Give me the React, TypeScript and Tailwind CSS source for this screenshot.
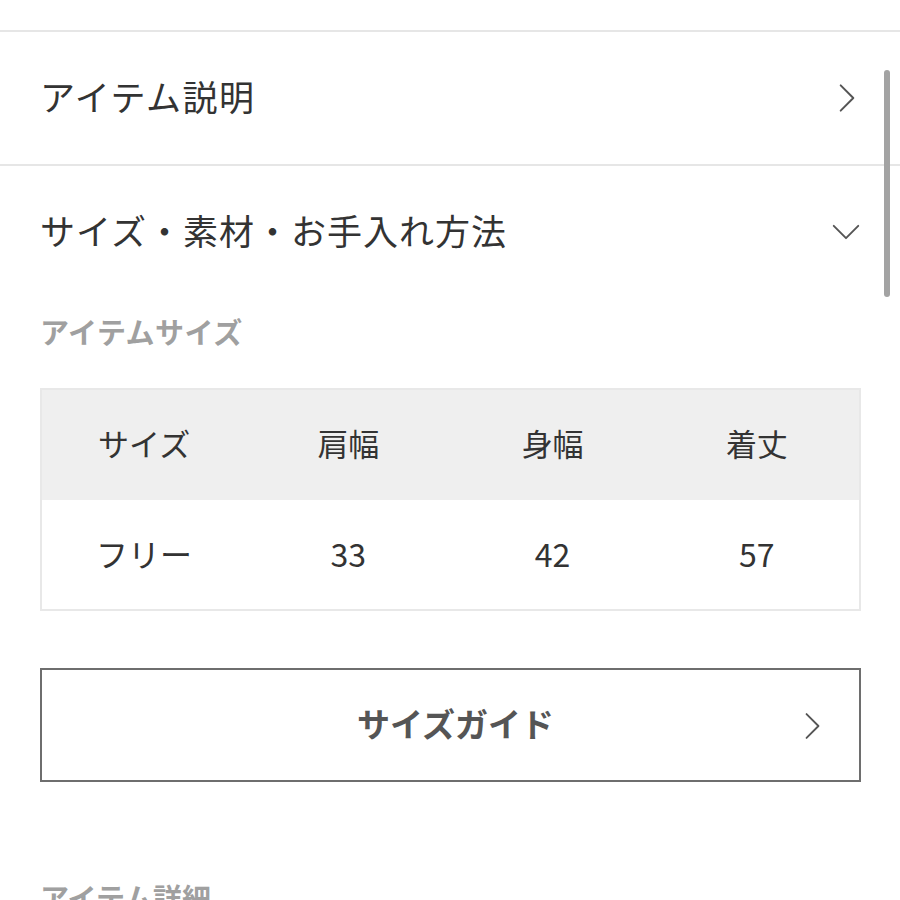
import React from "react";

const font = { fontFamily: '"Noto Sans CJK JP", "Noto Sans", sans-serif' };

function ChevronRight({ className }: { className?: string }) {
  return (
    <svg viewBox="0 0 20 32" className={className} fill="none" stroke="currentColor" strokeWidth="2.2" strokeLinecap="round" strokeLinejoin="round">
      <path d="M3 2 L17 16 L3 30" />
    </svg>
  );
}

function ChevronDown({ className }: { className?: string }) {
  return (
    <svg viewBox="0 0 32 20" className={className} fill="none" stroke="currentColor" strokeWidth="2.2" strokeLinecap="round" strokeLinejoin="round">
      <path d="M2 3 L16 17 L30 3" />
    </svg>
  );
}

export default function App() {
  const headers = ["サイズ", "肩幅", "身幅", "着丈"];
  const values = ["フリー", "33", "42", "57"];
  return (
    <div className="relative w-[900px] h-[900px] overflow-hidden bg-white" style={font}>
      <div className="h-[30px]" />
      <div className="border-t-2 border-[#e6e6e6]" />
      <div className="h-[132px] flex items-center justify-between pl-[40px] pr-[44px]">
        <span className="text-[35px] tracking-[1.5px] text-[#333] -mt-[4px]">アイテム説明</span>
        <ChevronRight className="w-[18px] h-[30px] text-[#555]" />
      </div>
      <div className="border-t-2 border-[#e6e6e6]" />
      <div className="h-[132px] flex items-center justify-between pl-[40px] pr-[40px]">
        <span className="text-[35px] tracking-[1px] text-[#333] -mt-[4px]">サイズ・素材・お手入れ方法</span>
        <ChevronDown className="w-[28px] h-[20px] text-[#555]" />
      </div>
      <div className="pl-[40px] pr-[39px]">
        <div className="pt-[12px] text-[29px] tracking-[0.5px] font-bold text-[#a0a0a0] leading-[42px]">アイテムサイズ</div>
        <div className="mt-[36px] border-2 border-[#e8e8e8]">
          <div className="grid grid-cols-4 h-[110px] bg-[#efefef] items-center">
            {headers.map((h) => (
              <div key={h} className="text-center text-[31px] text-[#333] -mt-[4px]">{h}</div>
            ))}
          </div>
          <div className="grid grid-cols-4 h-[109px] bg-white items-center">
            {values.map((v) => (
              <div key={v} className="text-center text-[32px] text-[#333] -mt-[4px]">{v}</div>
            ))}
          </div>
        </div>
        <div className="mt-[57px] h-[114px] border-2 border-[#6e6e6e] relative flex items-center justify-center">
          <span className="text-[33px] font-bold text-[#555] pl-[10px] -mt-[2px]">サイズガイド</span>
          <ChevronRight className="absolute right-[38px] top-[41px] w-[17px] h-[30px] text-[#555]" />
        </div>
        <div className="mt-[94px] text-[29px] font-bold text-[#a0a0a0] leading-[42px]">アイテム詳細</div>
      </div>
      <div className="absolute left-[884px] top-[70px] w-[6px] h-[227px] rounded-full bg-[#a3a3a3]" />
    </div>
  );
}
